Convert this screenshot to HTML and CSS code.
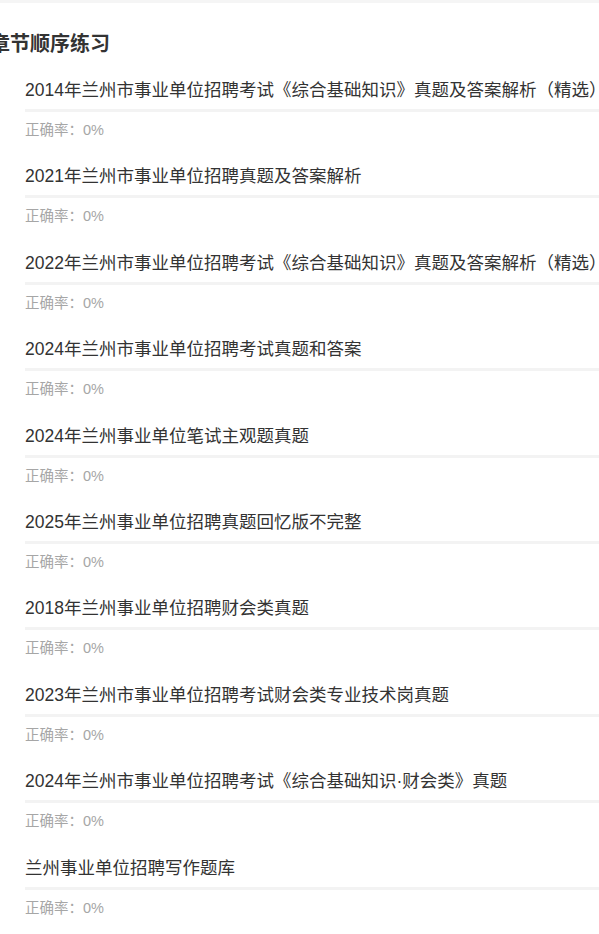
FILE: index.html
```html
<!DOCTYPE html>
<html lang="zh-CN">
<head>
    <meta charset="UTF-8">
    <meta name="viewport" content="width=device-width, initial-scale=1.0">
    <title>章节顺序练习</title>
    <link rel="stylesheet" href="styles.css">
</head>
<body>

    <div class="top-bar"></div>

    <div class="section">
        <h2 class="section-title">章节顺序练习</h2>

        <!-- Chapter list -->
        <div class="chapter-list">
            <div class="chapter">
                <div class="chapter-name">2014年兰州市事业单位招聘考试《综合基础知识》真题及答案解析（精选）</div>
                <div class="chapter-rate">正确率：0%</div>
            </div>
            <div class="chapter">
                <div class="chapter-name">2021年兰州市事业单位招聘真题及答案解析</div>
                <div class="chapter-rate">正确率：0%</div>
            </div>
            <div class="chapter">
                <div class="chapter-name">2022年兰州市事业单位招聘考试《综合基础知识》真题及答案解析（精选）</div>
                <div class="chapter-rate">正确率：0%</div>
            </div>
            <div class="chapter">
                <div class="chapter-name">2024年兰州市事业单位招聘考试真题和答案</div>
                <div class="chapter-rate">正确率：0%</div>
            </div>
            <div class="chapter">
                <div class="chapter-name">2024年兰州事业单位笔试主观题真题</div>
                <div class="chapter-rate">正确率：0%</div>
            </div>
            <div class="chapter">
                <div class="chapter-name">2025年兰州事业单位招聘真题回忆版不完整</div>
                <div class="chapter-rate">正确率：0%</div>
            </div>
            <div class="chapter">
                <div class="chapter-name">2018年兰州事业单位招聘财会类真题</div>
                <div class="chapter-rate">正确率：0%</div>
            </div>
            <div class="chapter">
                <div class="chapter-name">2023年兰州市事业单位招聘考试财会类专业技术岗真题</div>
                <div class="chapter-rate">正确率：0%</div>
            </div>
            <div class="chapter">
                <div class="chapter-name">2024年兰州市事业单位招聘考试《综合基础知识·财会类》真题</div>
                <div class="chapter-rate">正确率：0%</div>
            </div>
            <div class="chapter">
                <div class="chapter-name">兰州事业单位招聘写作题库</div>
                <div class="chapter-rate">正确率：0%</div>
            </div>
        </div>
    </div>

</body>
</html>
```

FILE: styles.css
```css
body {
    font-family: "Liberation Sans", "Noto Sans CJK SC", sans-serif;
    background-color: #fff;
    margin: 0;
    overflow: hidden;
}

.top-bar {
    height: 3px;
    background-color: #f5f5f5;
}

.section-title {
    margin: 27px 0 0 -10px;
    font-size: 20px;
    line-height: 28px;
    font-weight: bold;
    color: #333;
    white-space: nowrap;
}

.chapter-list {
    padding-top: 20px;
}

.chapter {
    padding: 0 0 24.4px 25px;
}

.chapter-name {
    font-size: 17.5px;
    line-height: 24px;
    color: #333;
    white-space: nowrap;
    padding-bottom: 7px;
    border-bottom: 3px solid #f3f3f3;
}

.chapter-rate {
    margin-top: 8px;
    font-size: 14.5px;
    line-height: 20px;
    color: #a6a6a6;
}
```
